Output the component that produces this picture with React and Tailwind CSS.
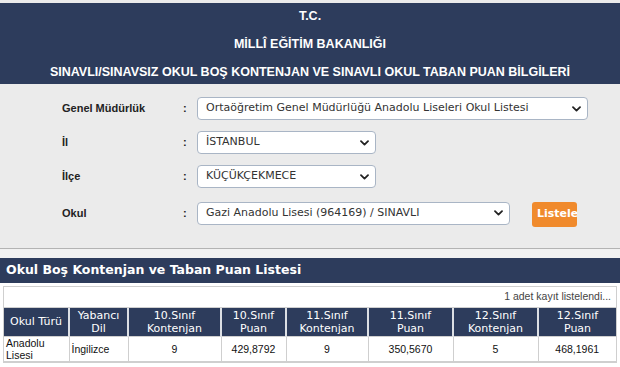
import React from "react";

function Chevron() {
  return (
    <svg width="9" height="6" viewBox="0 0 9 6" className="absolute right-[6px] top-1/2 -translate-y-1/2">
      <path d="M1 1.2 L4.5 4.6 L8 1.2" fill="none" stroke="#222" strokeWidth="1.8" strokeLinecap="round" strokeLinejoin="round" />
    </svg>
  );
}

function Select({ w, children }) {
  return (
    <div
      className={`relative flex items-center h-[23px] bg-white border border-[#a9b5c5] rounded-[4px] pl-[8px] text-[11px] text-[#333] font-['DejaVu_Sans',sans-serif] whitespace-nowrap ${w}`}
    >
      <span>{children}</span>
      <Chevron />
    </div>
  );
}

const labelCls = "text-[11px] font-bold text-[#222] font-['Liberation_Sans',Arial,sans-serif]";
const colonCls = "text-[11px] font-bold text-[#222] font-['Liberation_Sans',Arial,sans-serif]";

export default function App() {
  const th = "bg-[#2d3c5c] text-white font-normal text-[11px] leading-[13px] font-['DejaVu_Sans',sans-serif] text-center align-middle border-x-2 border-[#dcdfe4] px-[2px]";
  const td = "border border-[#cfcfcf] text-[10.5px] leading-[12px] text-[#111] font-['Liberation_Sans',Arial,sans-serif] text-center align-middle";
  return (
    <div className="w-[620px] h-[367px] overflow-hidden bg-[#ebebeb] flex flex-col">
      <div className="h-[3px] bg-[#ebebeb]" />
      <div className="h-[81px] bg-[#2d3c5c] flex flex-col items-center text-white font-bold text-[12.5px] font-['Liberation_Sans',Arial,sans-serif]">
        <div className="h-[27px] leading-[27px]">T.C.</div>
        <div className="h-[28px] leading-[28px]">MİLLÎ EĞİTİM BAKANLIĞI</div>
        <div className="h-[28px] leading-[28px]">SINAVLI/SINAVSIZ OKUL BOŞ KONTENJAN VE SINAVLI OKUL TABAN PUAN BİLGİLERİ</div>
      </div>

      <div className="h-[165px] border-b border-[#b3b3b3] pt-[13px] pl-[62px] flex flex-col gap-[11px]">
        <div className="flex items-center">
          <div className={`${labelCls} w-[121px]`}>Genel Müdürlük</div>
          <div className={`${colonCls} w-[14px]`}>:</div>
          <Select w="w-[391px]">Ortaöğretim Genel Müdürlüğü Anadolu Liseleri Okul Listesi</Select>
        </div>
        <div className="flex items-center">
          <div className={`${labelCls} w-[121px]`}>İl</div>
          <div className={`${colonCls} w-[14px]`}>:</div>
          <Select w="w-[179px]">İSTANBUL</Select>
        </div>
        <div className="flex items-center">
          <div className={`${labelCls} w-[121px]`}>İlçe</div>
          <div className={`${colonCls} w-[14px]`}>:</div>
          <Select w="w-[179px]">KÜÇÜKÇEKMECE</Select>
        </div>
        <div className="flex items-center">
          <div className={`${labelCls} w-[121px]`}>Okul</div>
          <div className={`${colonCls} w-[14px]`}>:</div>
          <Select w="w-[313px]">Gazi Anadolu Lisesi (964169) / SINAVLI</Select>
          <div className="ml-[22px] mt-[3px] w-[45px] h-[25px] rounded-[3px] bg-[#f08a2c] overflow-hidden flex items-center pl-[5px] text-white font-bold text-[11px] font-['DejaVu_Sans',sans-serif] whitespace-nowrap">
            Listele
          </div>
        </div>
      </div>

      <div className="h-[9px] bg-[#f1f1f1]" />
      <div className="h-[25px] bg-[#2d3c5c] flex items-center pl-[6px] text-white font-bold text-[12.5px] font-['DejaVu_Sans',sans-serif]">
        Okul Boş Kontenjan ve Taban Puan Listesi
      </div>

      <div className="flex-1 bg-white pt-[3px] px-[3px]">
        <div className="border border-[#cfcfcf]">
          <div className="h-[21px] flex items-center justify-end pr-[5px] text-[10.5px] text-[#444] font-['Liberation_Sans',Arial,sans-serif] border-b border-[#cfcfcf]">
            1 adet kayıt listelendi...
          </div>
          <table className="w-full border-collapse table-fixed">
            <colgroup>
              <col className="w-[65px]" />
              <col className="w-[59px]" />
              <col className="w-[93px]" />
              <col className="w-[65px]" />
              <col className="w-[82px]" />
              <col className="w-[85px]" />
              <col className="w-[85px]" />
              <col className="w-[78px]" />
            </colgroup>
            <thead>
              <tr className="h-[28px]">
                <th className={`${th} border-l-0`}>Okul Türü</th>
                <th className={th}>Yabancı<br />Dil</th>
                <th className={th}>10.Sınıf<br />Kontenjan</th>
                <th className={th}>10.Sınıf<br />Puan</th>
                <th className={th}>11.Sınıf<br />Kontenjan</th>
                <th className={th}>11.Sınıf<br />Puan</th>
                <th className={th}>12.Sınıf<br />Kontenjan</th>
                <th className={`${th} border-r-0`}>12.Sınıf<br />Puan</th>
              </tr>
            </thead>
            <tbody>
              <tr className="h-[25px]">
                <td className={`${td} text-left pl-[2px] border-l-0`}>Anadolu<br />Lisesi</td>
                <td className={`${td} text-left pl-[2px]`}>İngilizce</td>
                <td className={td}>9</td>
                <td className={td}>429,8792</td>
                <td className={td}>9</td>
                <td className={td}>350,5670</td>
                <td className={td}>5</td>
                <td className={`${td} border-r-0`}>468,1961</td>
              </tr>
            </tbody>
          </table>
        </div>
      </div>
    </div>
  );
}
